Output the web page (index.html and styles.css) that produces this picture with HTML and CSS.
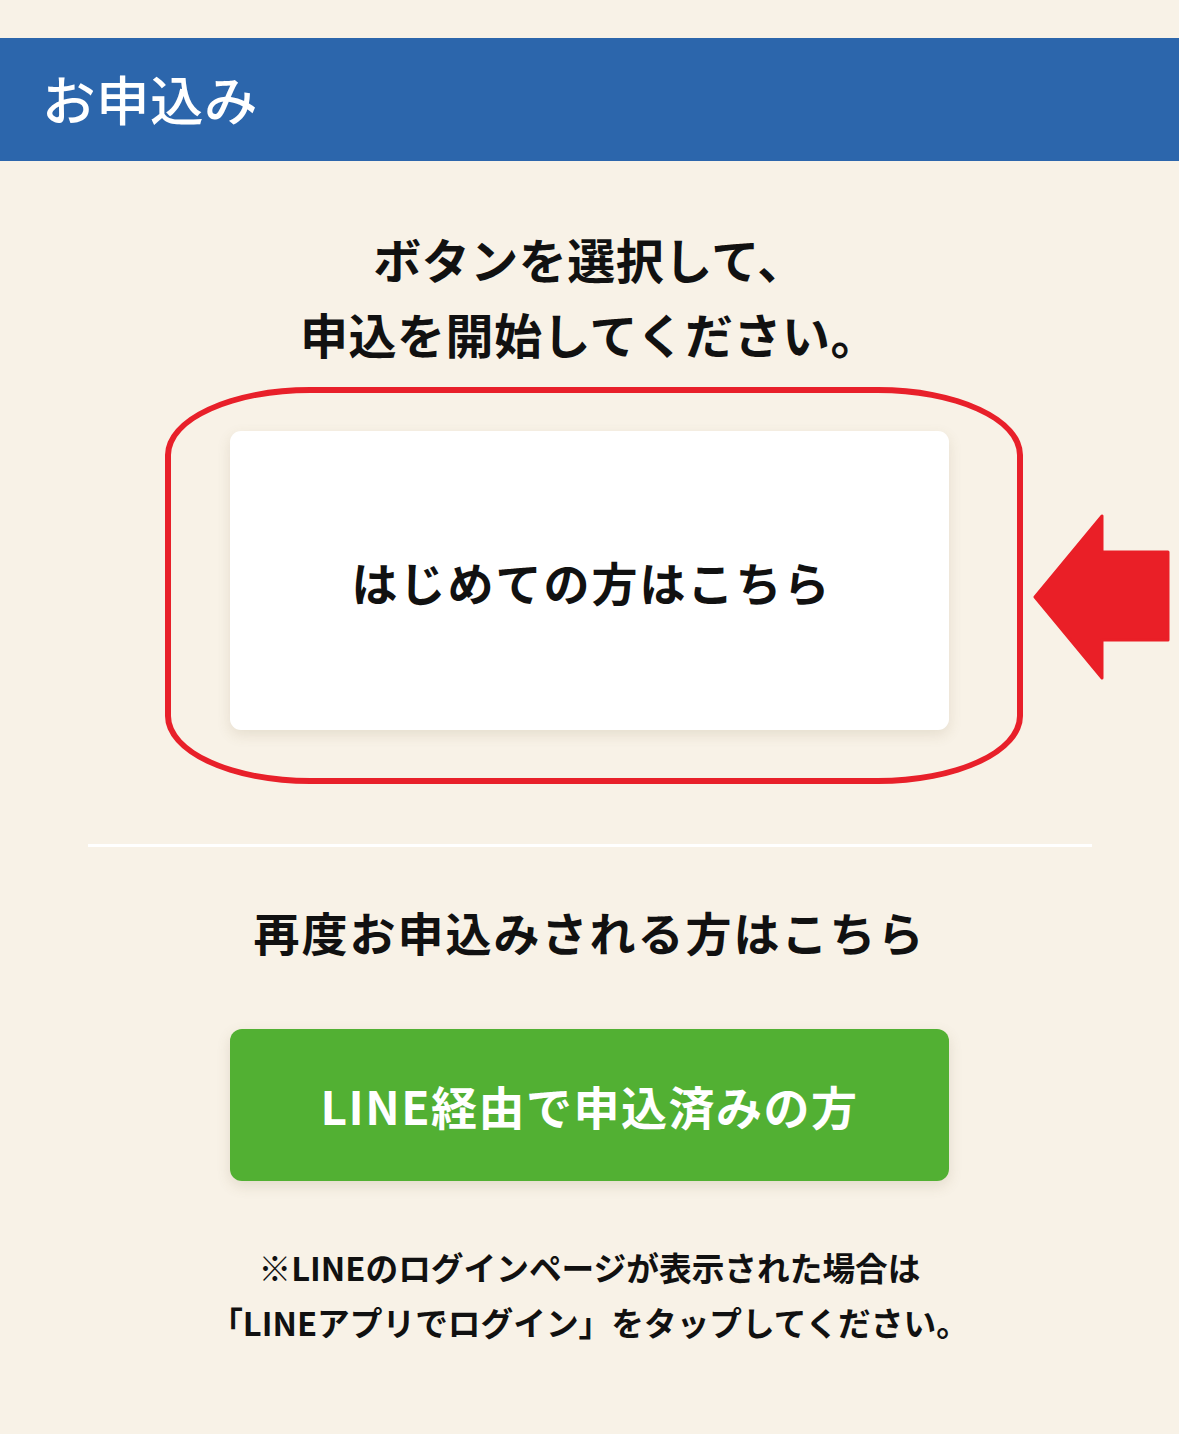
FILE: index.html
```html
<!DOCTYPE html>
<html lang="ja">
<head>
<meta charset="utf-8">
<title>お申込み</title>
<link rel="stylesheet" href="styles.css">
</head>
<body>
<header class="page-header">
  <h1 class="page-title">お申込み</h1>
</header>
<main class="content">
  <p class="lead">ボタンを選択して、<br>申込を開始してください。</p>
  <div class="card-wrap">
    <a class="card-button" href="#">はじめての方はこちら</a>
    <span class="highlight-ring" aria-hidden="true"></span>
    <svg class="pointer-arrow" viewBox="0 0 137 166" aria-hidden="true">
      <path d="M2 83 L69 2 L69 38 L135 38 L135 126 L69 126 L69 164 Z" fill="#ea1f27" stroke="#ea1f27" stroke-width="3" stroke-linejoin="round"/>
    </svg>
  </div>
  <hr class="divider">
  <p class="sub-heading">再度お申込みされる方はこちら</p>
  <a class="line-button" href="#">LINE経由で申込済みの方</a>
  <p class="note">※LINEのログインページが表示された場合は<br>「LINEアプリでログイン」をタップしてください。</p>
</main>
</body>
</html>
```

FILE: styles.css
```css
* { box-sizing: border-box; }

html, body {
  margin: 0;
  padding: 0;
}

body {
  background: #f8f2e7;
  font-family: "Noto Sans CJK JP", "Noto Sans", sans-serif;
  color: #111;
  width: 1179px;
  min-height: 1434px;
  overflow: hidden;
}

.page-header {
  margin-top: 38px;
  height: 123px;
  background: #2c66ac;
  display: flex;
  align-items: center;
  padding-left: 42px;
  padding-bottom: 4px;
}

.page-title {
  margin: 0;
  color: #fff;
  font-size: 53.5px;
  font-weight: 500;
  line-height: 1;
  letter-spacing: 0.5px;
}

.content {
  display: flex;
  flex-direction: column;
  align-items: center;
}

.lead {
  margin: 60px 0 0;
  font-size: 48px;
  font-weight: 700;
  line-height: 75px;
  text-align: center;
  letter-spacing: 0.5px;
}

.card-wrap {
  position: relative;
  margin-top: 60px;
  width: 719px;
  height: 299px;
}

.card-button {
  display: flex;
  align-items: center;
  justify-content: center;
  width: 100%;
  height: 100%;
  background: #fff;
  border-radius: 11px;
  box-shadow: 0 5px 14px rgba(120, 100, 60, 0.14);
  color: #111;
  text-decoration: none;
  font-size: 46px;
  font-weight: 700;
  letter-spacing: 2px;
  padding-left: 4px;
}

.highlight-ring {
  position: absolute;
  left: -65px;
  right: -74px;
  top: -44px;
  bottom: -54px;
  border: 6px solid #e8202a;
  border-radius: 145px / 68px;
  pointer-events: none;
}

.pointer-arrow {
  position: absolute;
  left: 803px;
  top: 83px;
  width: 137px;
  height: 166px;
}

.divider {
  margin: 114px 0 0;
  width: 1004px;
  height: 3px;
  border: 0;
  background: #fff;
}

.sub-heading {
  margin: 54px 0 0;
  font-size: 46px;
  font-weight: 700;
  line-height: 60px;
  letter-spacing: 2px;
  text-align: center;
}

.line-button {
  margin-top: 68px;
  display: flex;
  align-items: center;
  justify-content: center;
  width: 719px;
  height: 152px;
  background: #52b033;
  border-radius: 12px;
  box-shadow: 0 5px 14px rgba(120, 100, 60, 0.16);
  color: #fff;
  text-decoration: none;
  font-size: 46px;
  font-weight: 700;
  letter-spacing: 1.5px;
}

.note {
  margin: 58px 0 0;
  font-size: 32.7px;
  font-weight: 700;
  line-height: 55px;
  text-align: center;
}
```
